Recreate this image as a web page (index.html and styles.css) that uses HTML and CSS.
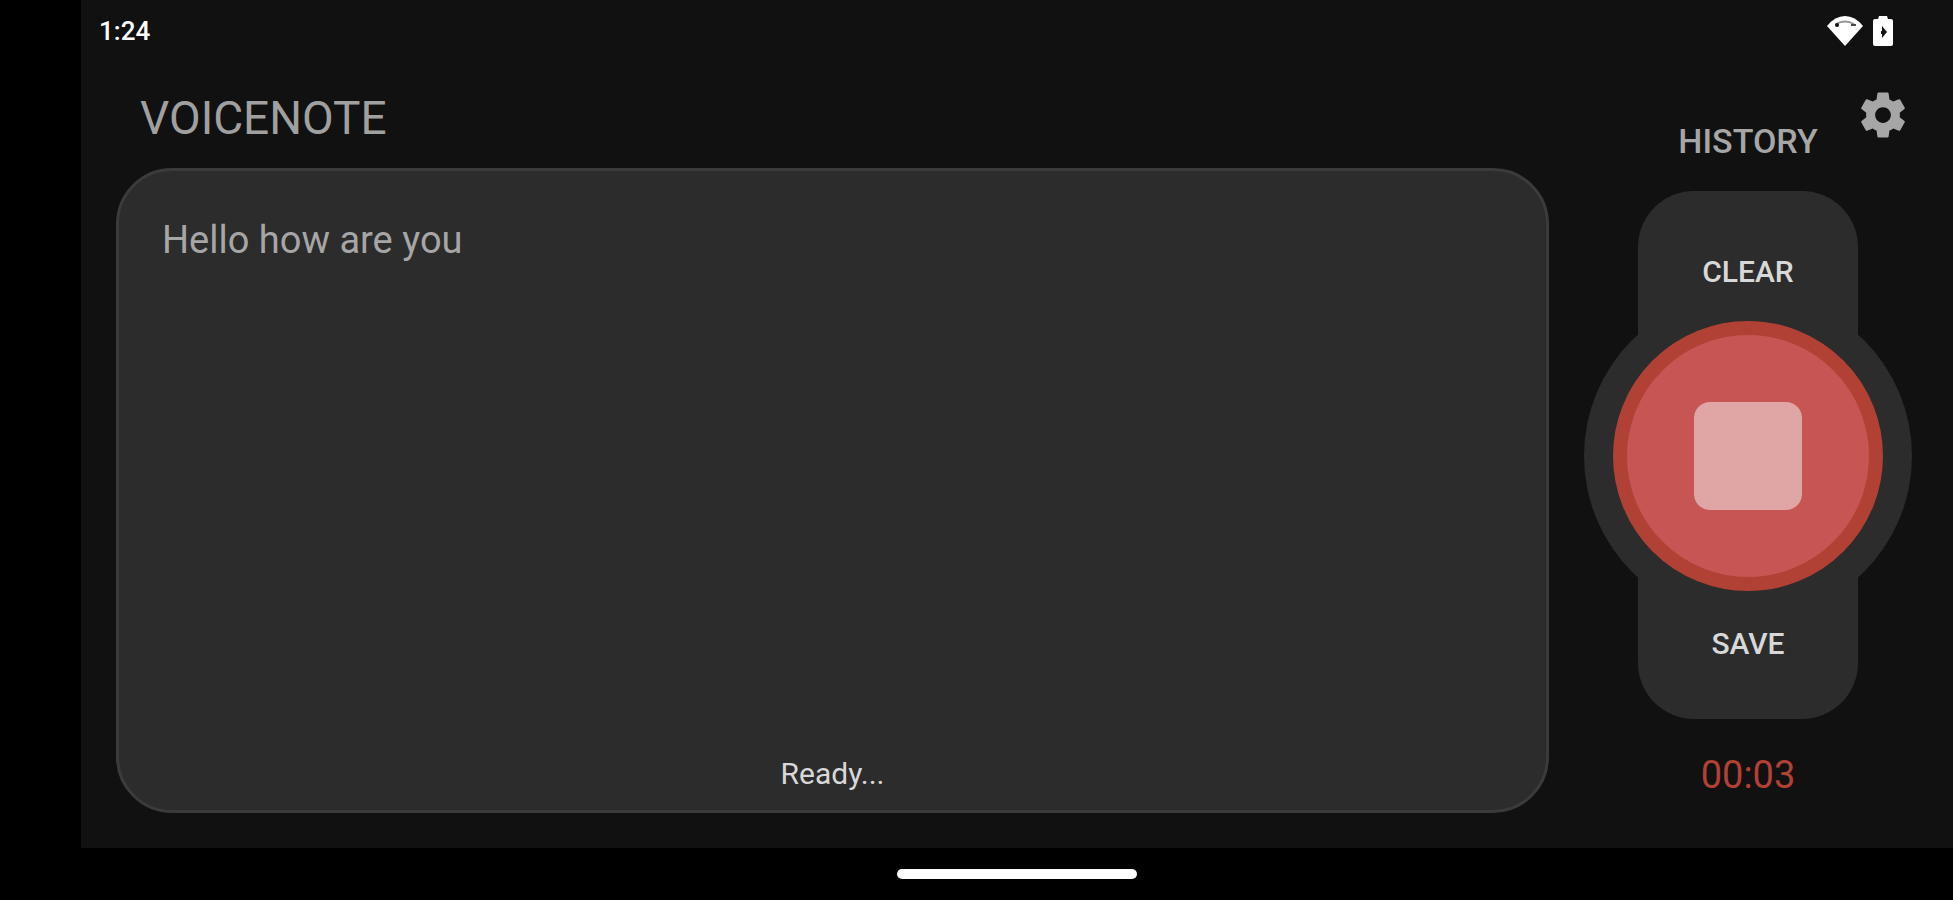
FILE: index.html
```html
<!DOCTYPE html>
<html lang="en">
<head>
<meta charset="utf-8">
<meta name="viewport" content="width=device-width, initial-scale=1">
<title>VoiceNote</title>
<link rel="stylesheet" href="styles.css">
</head>
<body>
<div class="device">
  <div class="app">
    <header class="status-bar">
      <time class="clock">1:24</time>
      <div class="status-icons">
        <svg class="wifi" viewBox="0 0 36 30" role="img" aria-label="Wi-Fi">
          <path d="M18 30 0 10Q8 0 18 0t18 10z" fill="#fff"/>
          <path d="M9 8q9-5 18 0" fill="none" stroke="#111" stroke-width="2" opacity=".45"/>
          <circle cx="10" cy="9" r="2" fill="#111"/>
          <path d="M24 9h5" stroke="#111" stroke-width="2" opacity=".75"/>
        </svg>
        <svg class="battery" viewBox="0 0 20 30" role="img" aria-label="Battery charging">
          <path d="M2 3h3l1-3h8l1 3h3q2 0 2 2v23q0 2-2 2H2q-2 0-2-2V5q0-2 2-2z" fill="#fff"/>
          <path d="M9 10v5H8v3h1v4l5-6-5-6z" fill="#111"/>
        </svg>
      </div>
    </header>
    <main class="content">
      <section class="note">
        <h1 class="title">VOICENOTE</h1>
        <div class="card">
          <textarea class="transcript" aria-label="Transcript" spellcheck="false">Hello how are you</textarea>
          <p class="state" role="status">Ready...</p>
        </div>
      </section>
      <aside class="controls">
        <button class="settings" type="button" aria-label="Settings">
          <svg class="gear" viewBox="0 0 24 24" aria-hidden="true">
            <path fill="#a6a6a6" fill-rule="evenodd" d="M19.43 12.98c.04-.32.07-.64.07-.98s-.03-.66-.07-.98l2.11-1.65c.19-.15.24-.42.12-.64l-2-3.46c-.12-.22-.39-.3-.61-.22l-2.49 1c-.52-.4-1.08-.73-1.69-.98l-.38-2.65C14.46 2.18 14.25 2 14 2h-4c-.25 0-.46.18-.49.42l-.38 2.65c-.61.25-1.17.59-1.69.98l-2.49-1c-.23-.09-.49 0-.61.22l-2 3.46c-.13.22-.07.49.12.64l2.11 1.65c-.04.32-.07.65-.07.98s.03.66.07.98l-2.11 1.65c-.19.15-.24.42-.12.64l2 3.46c.12.22.39.3.61.22l2.49-1c.52.4 1.08.73 1.69.98l.38 2.65c.03.24.24.42.49.42h4c.25 0 .46-.18.49-.42l.38-2.65c.61-.25 1.17-.59 1.69-.98l2.49 1c.23.09.49 0 .61-.22l2-3.46c.12-.22.07-.49-.12-.64l-2.11-1.65zM12 15.5c-1.93 0-3.5-1.57-3.5-3.5s1.57-3.5 3.5-3.5 3.5 1.57 3.5 3.5-1.57 3.5-3.5 3.5z"/>
          </svg>
        </button>
        <button class="history" type="button">HISTORY</button>
        <div class="recorder">
          <button class="action action-clear" type="button">CLEAR</button>
          <button class="record" type="button" aria-label="Stop recording"><span class="stop"></span></button>
          <button class="action action-save" type="button">SAVE</button>
        </div>
        <time class="timer">00:03</time>
      </aside>
    </main>
  </div>
  <footer class="nav-bar"><span class="handle"></span></footer>
</div>
</body>
</html>
```
FILE: styles.css
```css
* {
  box-sizing: border-box;
}

body {
  margin: 0;
  background: #000;
  font-family: Roboto, "Liberation Sans", sans-serif;
}

button {
  padding: 0;
  border: 0;
  background: none;
  color: inherit;
  font: inherit;
  cursor: pointer;
}

.device {
  display: flex;
  flex-direction: column;
  min-height: 100vh;
  padding-left: 81px;
}

.app {
  display: flex;
  flex: 1;
  flex-direction: column;
  background: #111;
}

.status-bar {
  display: flex;
  align-items: center;
  justify-content: space-between;
  height: 62px;
  padding: 0 60px 0 18px;
}

.clock {
  color: #fff;
  font-size: 26px;
  font-weight: 500;
}

.status-icons {
  display: flex;
  gap: 10px;
}

.wifi {
  width: 36px;
  height: 30px;
}

.battery {
  width: 20px;
  height: 30px;
}

.content {
  display: flex;
  flex: 1;
  gap: 35px;
  padding: 0 41px 35px 35px;
}

.note {
  display: flex;
  flex: 1;
  flex-direction: column;
  min-width: 0;
}

.title {
  height: 106px;
  margin: 0;
  padding-left: 24px;
  color: #a0a0a0;
  font-size: 46px;
  font-weight: 400;
  line-height: 112px;
}

.card {
  display: flex;
  flex: 1;
  flex-direction: column;
  padding: 45px 43px 16px;
  border: 3px solid #3b3b3b;
  border-radius: 56px;
  background: #2c2c2c;
}

.transcript {
  flex: 1;
  width: 100%;
  padding: 0;
  border: 0;
  outline: 0;
  background: none;
  color: #a6a6a6;
  font: 400 38px/48px Roboto, "Liberation Sans", sans-serif;
  resize: none;
}

.state {
  margin: 0;
  color: #d8d8d8;
  font-size: 30px;
  line-height: 40px;
  text-align: center;
}

.controls {
  position: relative;
  display: flex;
  flex-direction: column;
  align-items: center;
  width: 328px;
}

.settings {
  position: absolute;
  top: 26px;
  right: 2px;
  width: 54px;
  height: 54px;
}

.gear {
  display: block;
  width: 100%;
  height: 100%;
}

.history {
  height: 129px;
  padding-top: 28px;
  color: #a6a6a6;
  font-size: 34px;
  font-weight: 500;
  line-height: 100px;
}

.recorder {
  display: flex;
  flex-direction: column;
  align-items: center;
  width: 220px;
  border-radius: 56px;
  background: #2c2c2c;
}

.action {
  width: 100%;
  height: 130px;
  color: #d8d8d8;
  font-size: 30px;
  font-weight: 500;
}

.action-clear {
  padding-top: 30px;
}

.action-save {
  height: 128px;
  padding-bottom: 24px;
}

.record {
  display: grid;
  flex: none;
  place-items: center;
  width: 270px;
  height: 270px;
  border: 14px solid #b14035;
  border-radius: 50%;
  background: #c75553;
  box-shadow: 0 0 0 29px #2c2c2c;
}

.stop {
  width: 108px;
  height: 108px;
  border-radius: 16px;
  background: #e0a5a5;
}

.timer {
  padding-top: 30px;
  color: #b14035;
  font-size: 38px;
  line-height: 52px;
}

.nav-bar {
  display: flex;
  align-items: center;
  justify-content: center;
  height: 52px;
}

.handle {
  width: 240px;
  height: 10px;
  border-radius: 6px;
  background: #fff;
}
```
